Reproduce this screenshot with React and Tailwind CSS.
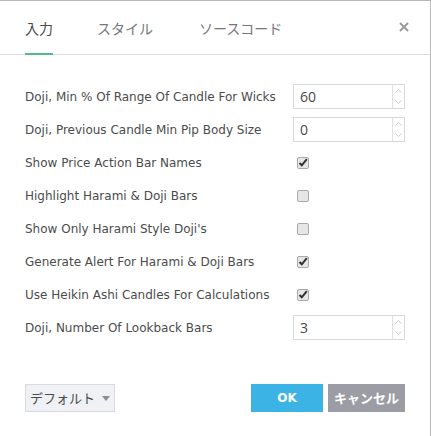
import React from "react";

const rows = [
  { label: "Doji, Min % Of Range Of Candle For Wicks", type: "num", value: "60" },
  { label: "Doji, Previous Candle Min Pip Body Size", type: "num", value: "0" },
  { label: "Show Price Action Bar Names", type: "check", checked: true },
  { label: "Highlight Harami & Doji Bars", type: "check", checked: false },
  { label: "Show Only Harami Style Doji's", type: "check", checked: false },
  { label: "Generate Alert For Harami & Doji Bars", type: "check", checked: true },
  { label: "Use Heikin Ashi Candles For Calculations", type: "check", checked: true },
  { label: "Doji, Number Of Lookback Bars", type: "num", value: "3" },
];

const NumInput = ({ value }) => (
  <div className="flex w-[112px] h-[25px] border border-[#d5d8dd] bg-white">
    <div className="flex-1 flex items-center pl-[6px] text-[14px] text-[#4a4a4a] font-['Open_Sans']">{value}</div>
    <div className="w-[12px] border-l border-[#dfe1e5] flex flex-col">
      <div className="flex-1 flex items-center justify-center">
        <svg width="7" height="4" viewBox="0 0 7 4"><path d="M0.5 3.5 L3.5 0.5 L6.5 3.5" fill="none" stroke="#bcc3cf" strokeWidth="0.8" /></svg>
      </div>
      <div className="flex-1 flex items-center justify-center">
        <svg width="7" height="4" viewBox="0 0 7 4"><path d="M0.5 0.5 L3.5 3.5 L6.5 0.5" fill="none" stroke="#bcc3cf" strokeWidth="0.8" /></svg>
      </div>
    </div>
  </div>
);

const Check = ({ checked }) => (
  <div className="ml-[4px] w-[12px] h-[12px] rounded-[2px] border border-[#a9a9a9] bg-[#e6e6e6] flex items-center justify-center">
    {checked && (
      <svg width="10" height="9" viewBox="0 0 10 9">
        <path d="M1.5 5 L3.8 7.3 L8.8 1.2" fill="none" stroke="#2f2f2f" strokeWidth="2" />
      </svg>
    )}
  </div>
);

export default function App() {
  return (
    <div
      className="w-[431px] h-[436px] bg-white border-t border-r border-[#b9b9b9] flex flex-col"
      style={{ fontFamily: '"DejaVu Sans", "Noto Sans CJK JP", sans-serif' }}
    >
      <div className="h-[54px] border-b border-[#dcdcdc] flex items-stretch pl-[25px] pr-[21px] shrink-0">
        <div className="relative flex items-center pt-[1px] text-[14px] text-[#4a4a4a] font-['Noto_Sans_CJK_JP']">
          入力
          <div className="absolute left-0 right-0 bottom-[-1px] h-[2px] bg-[#53b987]" />
        </div>
        <div className="flex items-center pt-[1px] ml-[44px] text-[14px] text-[#74777e] font-['Noto_Sans_CJK_JP']">スタイル</div>
        <div className="flex items-center pt-[1px] ml-[46px] text-[14px] text-[#74777e] font-['Noto_Sans_CJK_JP']">ソースコード</div>
        <div className="flex-1" />
        <div className="flex items-center pb-[2px]">
          <svg width="10" height="10" viewBox="0 0 10 10">
            <path d="M1 1 L9 9 M9 1 L1 9" stroke="#9b9b9b" strokeWidth="2" />
          </svg>
        </div>
      </div>

      <div className="pt-[25px] pl-[25px] flex flex-col">
        {rows.map((r, i) => (
          <div key={i} className="h-[33px] flex items-center">
            <div className="w-[268px] text-[12px] text-[#4b4b4b] whitespace-nowrap">{r.label}</div>
            {r.type === "num" ? <NumInput value={r.value} /> : <Check checked={r.checked} />}
          </div>
        ))}
      </div>

      <div className="mt-[40px] px-[25px] flex items-center">
        <div className="h-[28px] w-[90px] border border-[#d8dae0] bg-[#f0f1f5] flex items-center justify-center gap-[7px] text-[13px] text-[#4a4a4a] font-['Noto_Sans_CJK_JP']">
          デフォルト
          <svg width="8" height="5" viewBox="0 0 8 5"><path d="M0 0 H8 L4 5 Z" fill="#8b8d92" /></svg>
        </div>
        <div className="flex-1" />
        <div className="h-[28px] w-[72px] bg-[#3bb3e4] flex items-center justify-center text-[12px] font-bold text-white">OK</div>
        <div className="ml-[5px] h-[28px] w-[77px] bg-[#9b9ca4] flex items-center justify-center text-[13px] font-bold text-white font-['Noto_Sans_CJK_JP']">キャンセル</div>
      </div>
    </div>
  );
}
